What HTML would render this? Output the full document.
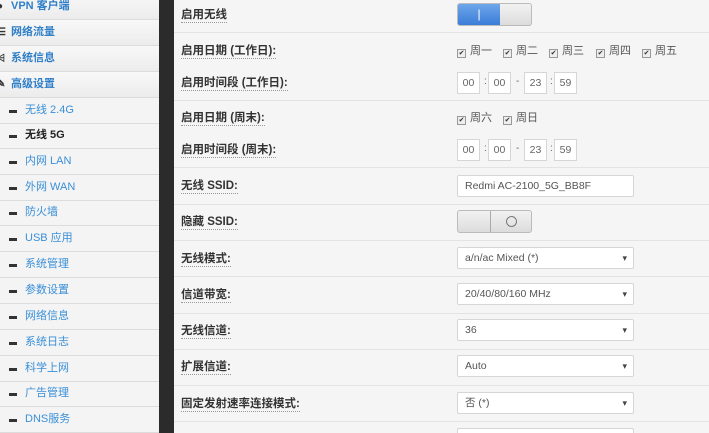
<!DOCTYPE html>
<html><head><meta charset="utf-8"><style>
*{margin:0;padding:0;box-sizing:border-box}
html,body{width:709px;height:433px;overflow:hidden}
body{background:#f5f5f5;font-family:"Liberation Sans","Noto Sans CJK SC",sans-serif;position:relative}
.side{position:absolute;left:0;top:0;width:159px;height:433px;background:#f4f4f4}
.it{position:absolute;left:0;width:159px;height:26px;border-bottom:1px solid #dcdcdc;font-size:11px;line-height:25px;color:#3a8fd8}
.top{font-weight:bold;color:#2f7fc8;padding-left:11px;background:linear-gradient(#f8f8f8,#ececec)}
.sub{padding-left:25px}
.sub:before{content:"";position:absolute;left:9px;top:12px;width:8px;height:3px;background:#333}
.act{color:#222;font-weight:bold}
.ic{position:absolute;left:-3px;top:0;color:#333;font-size:10px}
.dark{position:absolute;left:159px;top:0;width:15px;height:433px;background:#2b2b2b}
.main{position:absolute;left:174px;top:0;right:0;height:433px;background:#f5f5f5}
.row{position:absolute;left:0;right:0;border-bottom:1px solid #e3e3e3}
.lb{position:absolute;left:7px;font-size:11.5px;font-weight:bold;color:#333;border-bottom:1px dotted #999;line-height:13px}
.ctl{position:absolute;left:283px}
.sel,.inp{position:absolute;left:283px;width:177px;height:22px;background:#fff;border:1px solid #d6d6d6;border-radius:2px;font-size:10.5px;color:#555;line-height:20px;padding-left:7px}
.sel:after{content:"▾";position:absolute;right:6px;top:0;font-size:9px;color:#444}
.tb{position:absolute;height:22px;width:23px;background:#fff;border:1px solid #d6d6d6;font-size:10.5px;color:#666;line-height:20px;text-align:center}
.sep{position:absolute;font-size:10px;color:#666}
.cb{position:absolute;font-size:11px;color:#555;line-height:12px}
.cb i{display:inline-block;width:9px;height:9px;border:1px solid #999;background:#eee;font-size:7px;line-height:8px;text-align:center;font-style:normal;color:#333;margin-right:4px;vertical-align:-1px}
</style></head><body>
<div class="side">
<div class="it top" style="top:-6px"><span class="ic">●</span>VPN 客户端</div>
<div class="it top" style="top:20px"><span class="ic">☰</span>网络流量</div>
<div class="it top" style="top:46px"><span class="ic">⩤</span>系统信息</div>
<div class="it top" style="top:72px"><span class="ic">✎</span>高级设置</div>
<div class="it sub" style="top:98px">无线 2.4G</div>
<div class="it sub act" style="top:123px">无线 5G</div>
<div class="it sub" style="top:149px">内网 LAN</div>
<div class="it sub" style="top:175px">外网 WAN</div>
<div class="it sub" style="top:200px">防火墙</div>
<div class="it sub" style="top:226px">USB 应用</div>
<div class="it sub" style="top:252px">系统管理</div>
<div class="it sub" style="top:278px">参数设置</div>
<div class="it sub" style="top:304px">网络信息</div>
<div class="it sub" style="top:330px">系统日志</div>
<div class="it sub" style="top:356px">科学上网</div>
<div class="it sub" style="top:381px">广告管理</div>
<div class="it sub" style="top:407px">DNS服务</div>
</div>
<div class="dark"></div>
<div class="main">
<div class="row" style="top:0;height:33px"></div>
<div class="row" style="top:33px;height:68px"></div>
<div class="row" style="top:101px;height:67px"></div>
<div class="row" style="top:168px;height:37px"></div>
<div class="row" style="top:205px;height:36px"></div>
<div class="row" style="top:241px;height:36px"></div>
<div class="row" style="top:277px;height:37px"></div>
<div class="row" style="top:314px;height:36px"></div>
<div class="row" style="top:350px;height:36px"></div>
<div class="row" style="top:386px;height:36px"></div>

<div class="lb" style="top:9px">启用无线</div>
<div class="lb" style="top:45px">启用日期 (工作日):</div>
<div class="lb" style="top:77px">启用时间段 (工作日):</div>
<div class="lb" style="top:112px">启用日期 (周末):</div>
<div class="lb" style="top:144px">启用时间段 (周末):</div>
<div class="lb" style="top:180px">无线 SSID:</div>
<div class="lb" style="top:216px">隐藏 SSID:</div>
<div class="lb" style="top:253px">无线模式:</div>
<div class="lb" style="top:289px">信道带宽:</div>
<div class="lb" style="top:325px">无线信道:</div>
<div class="lb" style="top:361px">扩展信道:</div>
<div class="lb" style="top:398px">固定发射速率连接模式:</div>

<div class="ctl" style="top:3px;width:75px;height:23px;border:1px solid #bbb;border-radius:3px;overflow:hidden;background:linear-gradient(#f2f2f2,#dcdcdc)">
<div style="position:absolute;left:0;top:0;width:42px;height:23px;background:linear-gradient(#6ea6ea,#3578d6);color:#fff;text-align:center;font-size:12px;line-height:21px">|</div></div>

<div class="cb" style="left:283px;top:45px"><i>✔</i>周一</div>
<div class="cb" style="left:329px;top:45px"><i>✔</i>周二</div>
<div class="cb" style="left:375px;top:45px"><i>✔</i>周三</div>
<div class="cb" style="left:422px;top:45px"><i>✔</i>周四</div>
<div class="cb" style="left:468px;top:45px"><i>✔</i>周五</div>

<div class="tb" style="left:283px;top:72px">00</div><span class="sep" style="left:310px;top:76px">:</span>
<div class="tb" style="left:314px;top:72px">00</div><span class="sep" style="left:342px;top:76px">-</span>
<div class="tb" style="left:350px;top:72px">23</div><span class="sep" style="left:376px;top:76px">:</span>
<div class="tb" style="left:380px;top:72px">59</div>

<div class="cb" style="left:283px;top:112px"><i>✔</i>周六</div>
<div class="cb" style="left:329px;top:112px"><i>✔</i>周日</div>

<div class="tb" style="left:283px;top:139px">00</div><span class="sep" style="left:310px;top:143px">:</span>
<div class="tb" style="left:314px;top:139px">00</div><span class="sep" style="left:342px;top:143px">-</span>
<div class="tb" style="left:350px;top:139px">23</div><span class="sep" style="left:376px;top:143px">:</span>
<div class="tb" style="left:380px;top:139px">59</div>

<div class="inp" style="top:175px">Redmi AC-2100_5G_BB8F</div>

<div class="ctl" style="top:210px;width:75px;height:23px;border:1px solid #bbb;border-radius:3px;overflow:hidden;background:linear-gradient(#f2f2f2,#dcdcdc)">
<div style="position:absolute;left:32px;top:0;width:1px;height:23px;background:#aaa"></div>
<div style="position:absolute;left:48px;top:5px;width:11px;height:11px;border:1.5px solid #777;border-radius:50%"></div></div>

<div class="sel" style="top:247px">a/n/ac Mixed (*)</div>
<div class="sel" style="top:283px">20/40/80/160 MHz</div>
<div class="sel" style="top:319px">36</div>
<div class="sel" style="top:355px">Auto</div>
<div class="sel" style="top:392px">否 (*)</div>
<div class="sel" style="top:428px"></div>
</div>
</body></html>
